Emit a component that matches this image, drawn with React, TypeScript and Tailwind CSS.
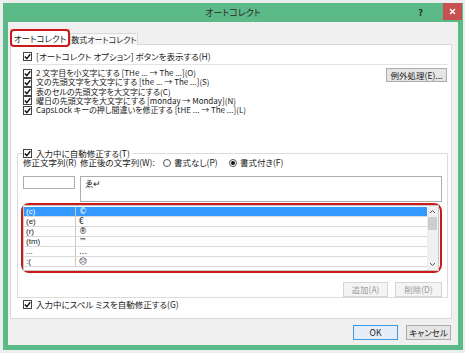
import React from "react";

// Fenêtre « オートコレクト » façon Windows 8 (Word)
const font = {
  fontFamily: '"Noto Sans CJK JP", "Liberation Sans", sans-serif',
};

function Check() {
  return (
    <span className="w-[9px] h-[9px] shrink-0 border border-[#444] bg-white flex items-center justify-center">
      <svg width="7" height="7" viewBox="0 0 7 7">
        <path d="M0.8 3.6 L2.8 5.6 L6.3 1.2" fill="none" stroke="#111" strokeWidth="1.4" />
      </svg>
    </span>
  );
}

function Radio({ on }: { on?: boolean }) {
  return (
    <span className="w-[8px] h-[8px] shrink-0 rounded-full border border-[#555] bg-white flex items-center justify-center">
      {on && <span className="w-[4px] h-[4px] rounded-full bg-[#111]" />}
    </span>
  );
}

function CheckRow({ label, className = "" }: { label: string; className?: string }) {
  return (
    <div className={"flex items-center gap-[4px] " + className}>
      <Check />
      <span className="whitespace-nowrap">{label}</span>
    </div>
  );
}

const options = [
  "2 文字目を小文字にする [THe ... → The ...](O)",
  "文の先頭文字を大文字にする [the ... → The ...](S)",
  "表のセルの先頭文字を大文字にする(C)",
  "曜日の先頭文字を大文字にする [monday →  Monday](N)",
  "CapsLock キーの押し間違いを修正する [tHE ... → The ...](L)",
];

const entries = [
  ["(c)", "©"],
  ["(e)", "€"],
  ["(r)", "®"],
  ["(tm)", "™"],
  ["...", "…"],
  [":(", "☹"],
];

export default function App() {
  return (
    <div
      className="w-[465px] h-[353px] bg-[#eceeee] pt-[3px] pl-[3px] pr-[2px] pb-[3px] text-[8.5px] leading-none text-[#1a1a1a] [font-feature-settings:'palt']"
      style={font}
    >
      {/* cadre vert de la fenêtre */}
      <div className="h-full bg-[#5cba88] flex flex-col">
        {/* barre de titre */}
        <div className="h-[19px] relative flex items-center justify-center shrink-0">
          <span className="text-[9px] text-[#2b2b2b]">オートコレクト</span>
          <span className="absolute right-[40px] top-[5px] text-[9px] font-bold text-[#222]">?</span>
          <span className="absolute right-[1px] top-0 w-[19px] h-[17px] bg-[#c75050] flex items-center justify-center">
            <svg width="7" height="7" viewBox="0 0 7 7">
              <path d="M1 1 L6 6 M6 1 L1 6" stroke="#fff" strokeWidth="1.5" />
            </svg>
          </span>
        </div>

        {/* corps */}
        <div className="flex-1 mx-[5px] mb-[5px] bg-[#f0f0f0] pl-[2px] pr-[6px] pt-[7px]">
          {/* onglets */}
          <div className="flex items-end h-[16px]">
            <div className="relative z-10 h-[17px] -mb-px w-[60px] bg-white border border-[#d9d9d9] border-b-0 flex items-center justify-center">
              <span className="whitespace-nowrap">オートコレクト</span>
              <span className="absolute -inset-[1px] rounded-[4px] border-2 border-[#cc1a1a]" />
            </div>
            <div className="h-[12px] w-[68px] bg-[#f7f7f7] border border-[#d9d9d9] border-b-0 flex items-center justify-center text-[8px] whitespace-nowrap overflow-hidden">
              数式オートコレクト
            </div>
          </div>

          {/* panneau */}
          <div className="h-[275px] -mt-px bg-white border border-[#d9d9d9] flex flex-col">
            <CheckRow label="[オートコレクト オプション] ボタンを表示する(H)" className="mt-[6px] h-[10px] pl-[12px]" />
            <div className="mt-[3px] ml-[9px] mr-[3px] h-px bg-[#e3e3e3]" />

            <div className="h-[50px] flex pl-[12px] pr-[4px]">
              <div className="flex-1 pt-[3.5px] text-[8px]">
                {options.map((o) => (
                  <CheckRow key={o} label={o} className="h-[9.25px]" />
                ))}
              </div>
              <div className="mt-[3px] h-[14px] w-[61px] border border-[#acacac] bg-[#e5e5e5] flex items-center justify-center whitespace-nowrap">
                例外処理(E)...
              </div>
            </div>

            {/* groupe « 入力中に自動修正する » */}
            <div className="mt-[38px] ml-[6px] mr-[3px] h-[145px] border border-[#dcdcdc] pl-[5px] pr-[5px]">
              <div className="-mt-[6px] h-[10px] flex">
                <div className="bg-white pr-[3px] flex items-center gap-[4px]">
                  <Check />
                  <span className="whitespace-nowrap">入力中に自動修正する(T)</span>
                </div>
              </div>
              <div className="h-[9px] flex items-center whitespace-nowrap">
                <span className="w-[57px]">修正文字列(R)</span>
                <span className="w-[83px]">修正後の文字列(W):</span>
                <Radio />
                <span className="ml-[3px] w-[55px]">書式なし(P)</span>
                <Radio on />
                <span className="ml-[3px]">書式付き(F)</span>
              </div>
              <div className="mt-[9px] flex gap-[5px]">
                <div className="w-[52px] h-[13px] border border-[#abadb3] bg-white" />
                <div className="flex-1 h-[26px] border border-[#abadb3] bg-white pl-[4px] pt-[2px]">ゑ↵</div>
              </div>

              {/* liste entourée de rouge */}
              <div className="mt-px -ml-[2px] h-[70px] border-2 border-[#cc1a1a] rounded-[8px] pr-px">
                <div className="h-full border border-[#c8c8c8] bg-white flex">
                  <div className="flex-1 pt-px">
                    {entries.map(([a, b], i) => (
                      <div
                        key={a}
                        className={
                          "h-[10px] flex items-center border-b border-[#dadada] text-[8px] " +
                          (i === 0 ? "bg-[#3399ff] text-white" : "")
                        }
                      >
                        <span
                          className="w-[52px] pl-[2px] border-r border-[#c8c8c8] h-full flex items-center overflow-hidden"
                          style={{ fontFamily: '"Liberation Sans", sans-serif' }}
                        >
                          {a}
                        </span>
                        <span
                          className="pl-[3px] h-full flex items-center overflow-hidden"
                          style={{ fontFamily: '"DejaVu Sans", sans-serif' }}
                        >
                          {b}
                        </span>
                      </div>
                    ))}
                  </div>
                  {/* barre de défilement */}
                  <div className="w-[11px] bg-[#f0f0f0] flex flex-col items-center">
                    <svg width="7" height="9" viewBox="0 0 7 9" className="mt-[1px]">
                      <path d="M1 6 L3.5 3.5 L6 6" fill="none" stroke="#555" strokeWidth="1" />
                    </svg>
                    <div className="w-[9px] h-[13px] bg-[#cdcdcd] mt-[1px]" />
                    <div className="flex-1" />
                    <svg width="7" height="9" viewBox="0 0 7 9" className="mb-[1px]">
                      <path d="M1 3 L3.5 5.5 L6 3" fill="none" stroke="#555" strokeWidth="1" />
                    </svg>
                  </div>
                </div>
              </div>

              <div className="mt-[9px] flex justify-end gap-[7px] text-[#9a9a9a]">
                <div className="w-[45px] h-[15px] border border-[#d5d5d5] bg-[#f4f4f4] flex items-center justify-center">追加(A)</div>
                <div className="w-[47px] h-[15px] border border-[#d5d5d5] bg-[#f4f4f4] flex items-center justify-center">削除(D)</div>
              </div>
            </div>

            <CheckRow label="入力中にスペル ミスを自動修正する(G)" className="mt-px h-[10px] pl-[12px]" />
          </div>

          {/* boutons OK / キャンセル */}
          <div className="mt-[6px] flex justify-end gap-[8px] pr-px">
            <div className="w-[45px] h-[15px] border border-[#3c99e0] bg-[#e5eef7] flex items-center justify-center">OK</div>
            <div className="w-[45px] h-[15px] border border-[#acacac] bg-[#e5e5e5] flex items-center justify-center">キャンセル</div>
          </div>
        </div>
      </div>
    </div>
  );
}
